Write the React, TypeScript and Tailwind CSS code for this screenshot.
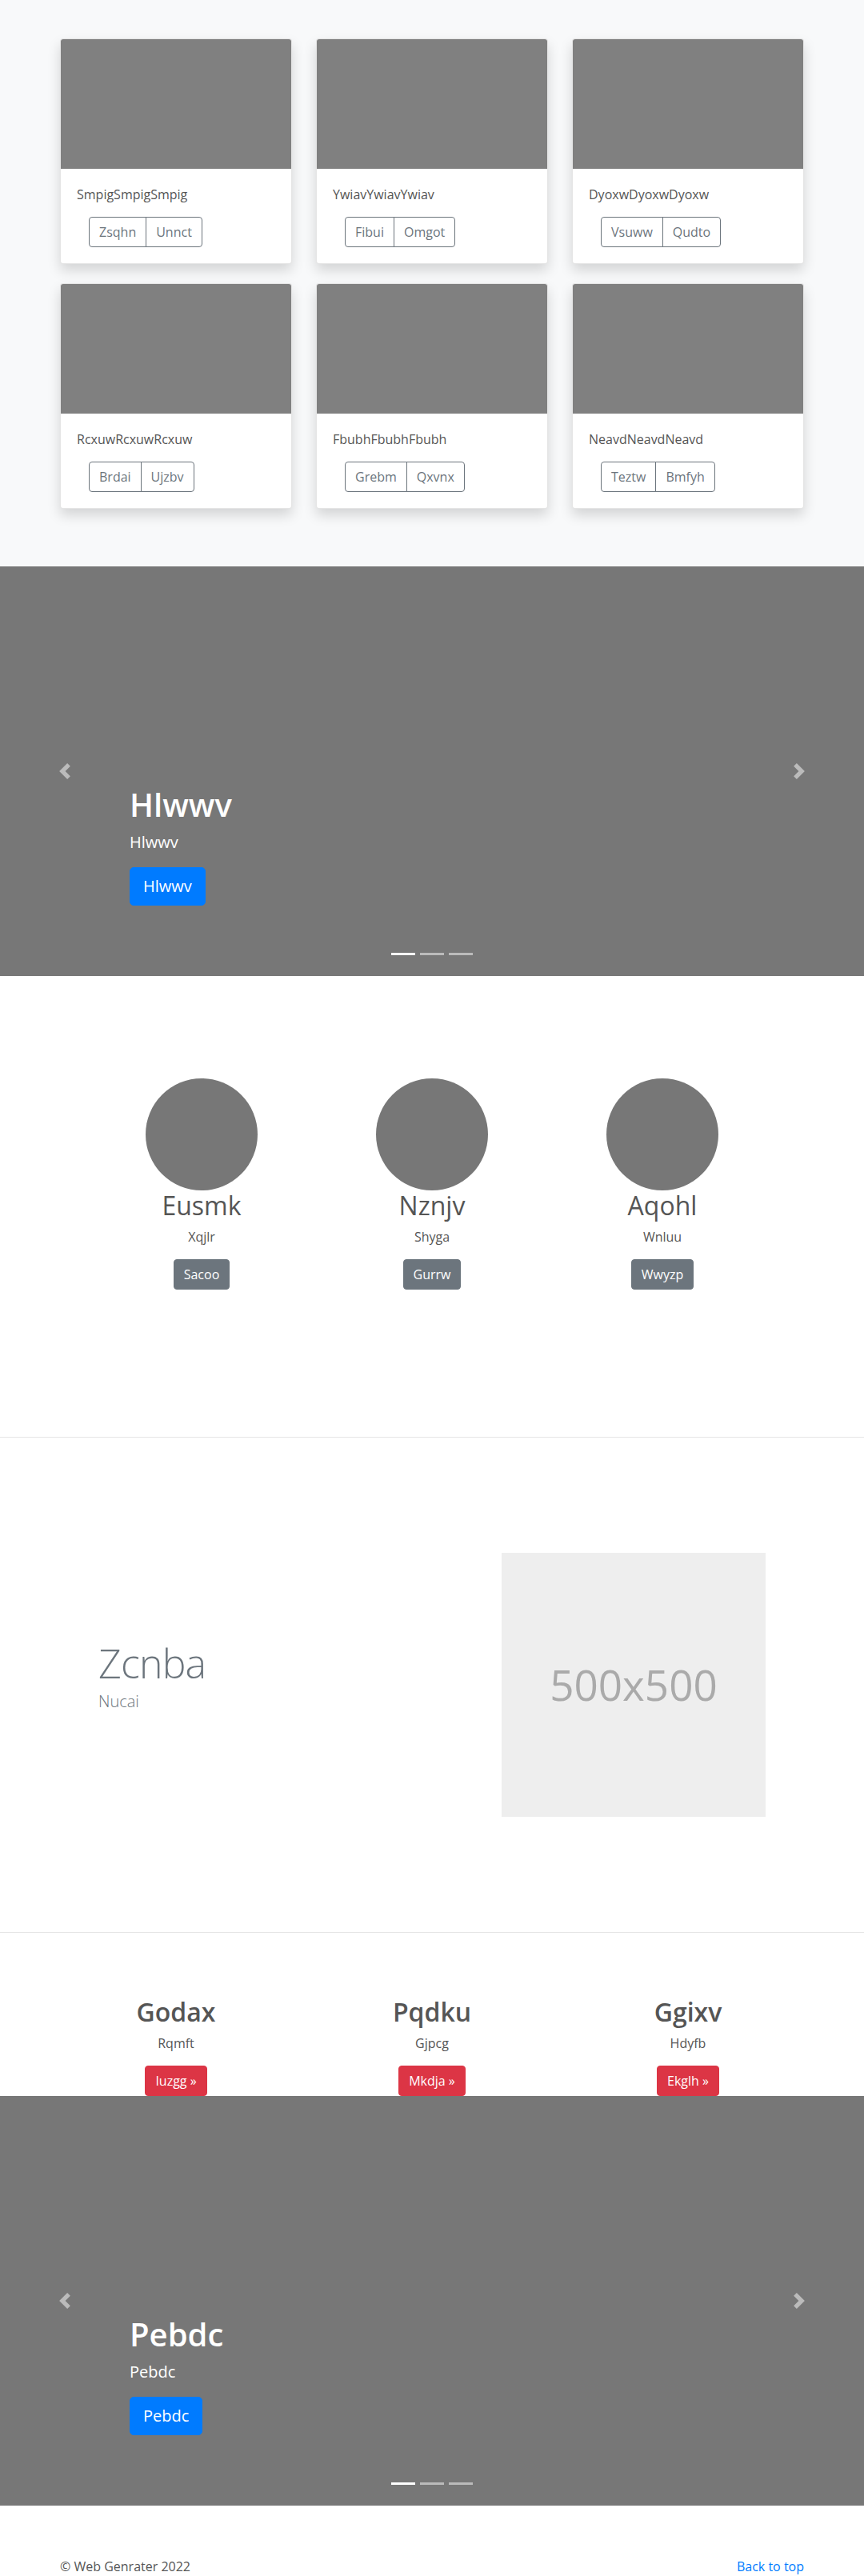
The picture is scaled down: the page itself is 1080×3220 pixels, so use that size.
import React from "react";

const cards = [
  { title: "SmpigSmpigSmpig", a: "Zsqhn", b: "Unnct" },
  { title: "YwiavYwiavYwiav", a: "Fibui", b: "Omgot" },
  { title: "DyoxwDyoxwDyoxw", a: "Vsuww", b: "Qudto" },
  { title: "RcxuwRcxuwRcxuw", a: "Brdai", b: "Ujzbv" },
  { title: "FbubhFbubhFbubh", a: "Grebm", b: "Qxvnx" },
  { title: "NeavdNeavdNeavd", a: "Teztw", b: "Bmfyh" },
];

const people = [
  { name: "Eusmk", sub: "Xqjlr", btn: "Sacoo" },
  { name: "Nznjv", sub: "Shyga", btn: "Gurrw" },
  { name: "Aqohl", sub: "Wnluu", btn: "Wwyzp" },
];

const features = [
  { name: "Godax", sub: "Rqmft", btn: "Iuzgg »" },
  { name: "Pqdku", sub: "Gjpcg", btn: "Mkdja »" },
  { name: "Ggixv", sub: "Hdyfb", btn: "Ekglh »" },
];

function Chevron({ dir }: { dir: "prev" | "next" }) {
  return (
    <svg width="20" height="20" viewBox="0 0 8 8" fill="#fff" className="opacity-50">
      {dir === "prev" ? (
        <path d="M5.25 0l-4 4 4 4 1.5-1.5L4.25 4l2.5-2.5L5.25 0z" />
      ) : (
        <path d="M2.75 0l-1.5 1.5L3.75 4l-2.5 2.5L2.75 8l4-4-4-4z" />
      )}
    </svg>
  );
}

function Carousel({ text }: { text: string }) {
  return (
    <section className="relative h-[512px] bg-[#777777] overflow-hidden">
      <div className="absolute left-0 top-0 bottom-0 w-[15%] flex items-center justify-center">
        <Chevron dir="prev" />
      </div>
      <div className="absolute right-0 top-0 bottom-0 w-[15%] flex items-center justify-center">
        <Chevron dir="next" />
      </div>
      <div className="absolute left-[15%] right-[15%] bottom-[48px] pt-[20px] pb-[20px] text-white text-left">
        <h1 className="text-[40px] leading-[48px] mb-[8px] font-semibold">{text}</h1>
        <p className="text-[20px] leading-[30px] mb-[16px]">{text}</p>
        <div className="pb-[20px]">
          <span className="inline-block bg-[#007bff] border border-[#007bff] text-white text-[20px] leading-[30px] px-[16px] py-[8px] rounded-[5px]">
            {text}
          </span>
        </div>
      </div>
      <div className="absolute left-0 right-0 bottom-[26px] flex justify-center gap-[6px]">
        <div className="w-[30px] h-[3px] bg-white" />
        <div className="w-[30px] h-[3px] bg-white opacity-50" />
        <div className="w-[30px] h-[3px] bg-white opacity-50" />
      </div>
    </section>
  );
}

export default function App() {
  return (
    <div className="font-['Open_Sans','Noto_Sans',sans-serif] text-[16px] leading-[24px] text-[#212529] bg-white">
      <section className="bg-[#f8f9fa] pt-[48px] pb-[72px]">
        <div className="w-[930px] mx-auto grid grid-cols-3 gap-x-[30px] gap-y-[24px]">
          {cards.map((c) => (
            <div
              key={c.title}
              className="bg-white border border-black/10 rounded-[4px] overflow-hidden shadow-[0_8px_16px_rgba(0,0,0,0.15)]"
            >
              <div className="h-[162px] bg-[#808080]" />
              <div className="p-[20px]">
                <p className="mb-[16px] text-[#555]">{c.title}</p>
                <div className="pl-[15px] flex">
                  <span className="border border-[#6c757d] text-[#6c757d] px-[12px] py-[6px] rounded-l-[4px]">{c.a}</span>
                  <span className="border border-[#6c757d] text-[#6c757d] px-[12px] py-[6px] rounded-r-[4px] -ml-px">{c.b}</span>
                </div>
              </div>
            </div>
          ))}
        </div>
      </section>

      <Carousel text="Hlwwv" />

      <section className="pt-[128px] pb-[184px]">
        <div className="w-[864px] mx-auto grid grid-cols-3 text-center">
          {people.map((p) => (
            <div key={p.name} className="flex flex-col items-center">
              <div className="w-[140px] h-[140px] rounded-full bg-[#777777]" />
              <h2 className="text-[32px] leading-[38px] font-normal mb-[8px] text-[#555]">{p.name}</h2>
              <p className="mb-[16px] text-[#555]">{p.sub}</p>
              <span className="inline-block bg-[#6c757d] border border-[#6c757d] text-white px-[12px] py-[6px] rounded-[4px]">{p.btn}</span>
            </div>
          ))}
        </div>
      </section>

      <hr className="border-0 border-t border-black/10" />

      <section className="py-[144px]">
        <div className="w-[864px] mx-auto flex items-center">
          <div className="w-[504px] px-[15px]">
            <h2 className="text-[50px] leading-[50px] font-light tracking-[-0.8px] text-[#6c757d] mb-[8px]">Zcnba</h2>
            <p className="text-[20px] leading-[30px] font-light text-[#6c757d] mb-[16px]">Nucai</p>
          </div>
          <div className="w-[360px] px-[15px]">
            <div className="w-[330px] h-[330px] bg-[#eeeeee] flex items-center justify-center text-[53px] text-[#aaaaaa]">
              500x500
            </div>
          </div>
        </div>
      </section>

      <hr className="border-0 border-t border-black/10" />

      <section className="pt-[80px]">
        <div className="w-[960px] mx-auto grid grid-cols-3 text-center">
          {features.map((f) => (
            <div key={f.name} className="flex flex-col items-center">
              <h2 className="text-[32px] leading-[38px] font-semibold mb-[8px] text-[#555]">{f.name}</h2>
              <p className="mb-[16px] text-[#555]">{f.sub}</p>
              <span className="inline-block bg-[#dc3545] border border-[#dc3545] text-white px-[12px] py-[6px] rounded-[4px]">{f.btn}</span>
            </div>
          ))}
        </div>
      </section>

      <Carousel text="Pebdc" />

      <footer className="pt-[64px]">
        <div className="w-[930px] mx-auto flex justify-between">
          <p className="text-[#555]">© Web Genrater 2022</p>
          <a href="#" className="text-[#007bff]">Back to top</a>
        </div>
      </footer>
    </div>
  );
}
